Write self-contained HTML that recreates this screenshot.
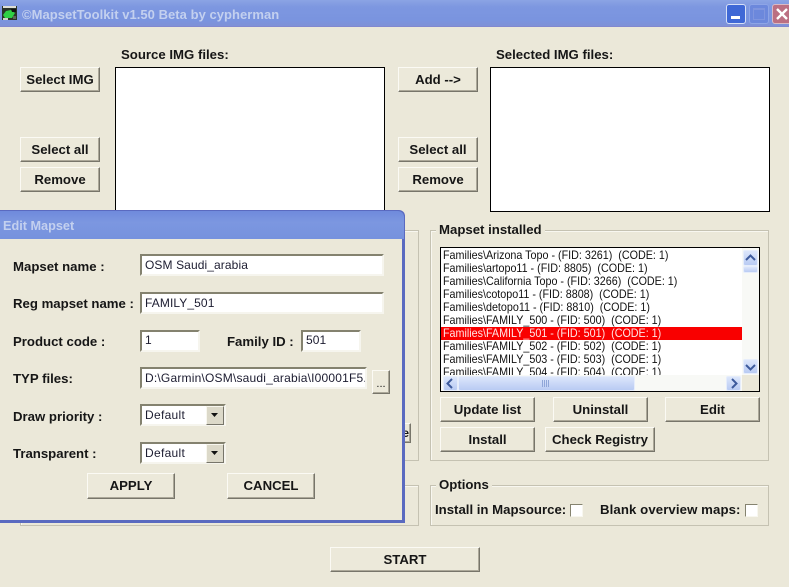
<!DOCTYPE html>
<html>
<head>
<meta charset="utf-8">
<style>
html,body{margin:0;padding:0}
body{width:789px;height:587px;position:relative;overflow:hidden;background:#ebe8d9;font-family:"Liberation Sans",sans-serif;color:#161616}
div,span{position:absolute;box-sizing:border-box;white-space:pre}
.l{font-weight:bold;font-size:13.2px;line-height:16px;height:16px}
.b{background:#ece9da;border:1px solid;border-color:#fbfaf4 #77756a #77756a #fbfaf4;box-shadow:inset -1px -1px 0 #aca899;font-weight:bold;font-size:13.2px;text-align:center}
.g{border:1px solid #c5c2b2;box-shadow:1px 1px 0 #f8f7f0 inset}
.lg{background:#ebe8d9;font-weight:bold;font-size:13.2px;line-height:16px;height:16px;padding:0 3px}
.i{background:#fff;border:2px solid;border-color:#84826f #f6f5ee #f6f5ee #84826f;font-size:12px;line-height:19px;padding-left:3px;color:#1c1c30;overflow:hidden;letter-spacing:.1px}
.w{background:#fff;border:1px solid #000}
.r{left:2px;width:300px;height:13px;font-size:12px;line-height:13px;color:#111}
.r span{left:0;top:0;transform:scaleX(.895);transform-origin:0 0}
.sb{background:linear-gradient(#dce6fb,#b9cbf3);border:1px solid #e6edfb;border-radius:2px}
.dd{width:18px;height:19px;background:#dcd9c9;border:1px solid;border-color:#f8f7ef #77756a #77756a #f8f7ef}
.cb{width:13px;height:13px;background:#fff;border:1px solid;border-color:#85836f #f8f7ef #f8f7ef #85836f}
</style>
</head>
<body>
<!-- title bar -->
<div style="left:0;top:0;width:789px;height:27px;background:linear-gradient(#8ba4e4 0,#7d97e0 25%,#7a94df 75%,#7f90d6 100%)"></div>
<div style="left:0;top:26px;width:789px;height:1px;background:#8188cf"></div>
<svg style="position:absolute;left:2px;top:6px" width="15" height="14"><rect width="15" height="14" fill="#2a3428"/><rect x="1" y="0" width="13" height="2" fill="#dedfd6"/><path d="M1 9L4 5L9 4L13 7L10 12H3Z" fill="#2fd044"/><path d="M9 3H14V6H10Z" fill="#111"/><path d="M1 12H6V14H1Z" fill="#cfd3c8"/><path d="M11 10H14V13H11Z" fill="#5b6a58"/></svg>
<div style="left:22px;top:6px;height:17px;font-size:13px;line-height:17px;font-weight:bold;color:#c3d0ef;letter-spacing:.04px">©MapsetToolkit v1.50 Beta by cypherman</div>
<div style="left:726px;top:4px;width:20px;height:20px;background:#3f68d6;border:1px solid #d7e0f6;border-radius:3px"></div>
<div style="left:731px;top:16px;width:9px;height:3px;background:#fff"></div>
<div style="left:749px;top:4px;width:20px;height:20px;background:#6c88dc;border:1px solid #8ea5e6;border-radius:3px"></div>
<div style="left:753px;top:8px;width:12px;height:12px;border:1px solid #7f95de;border-top:2px solid #7f95de"></div>
<div style="left:772px;top:4px;width:20px;height:20px;background:#bb6f82;border:1px solid #d9b9c4;border-radius:3px"></div>
<svg style="position:absolute;left:772px;top:4px" width="17" height="20"><path d="M5 5L15 15M15 5L5 15" stroke="#fff" stroke-width="2.4"/></svg>

<!-- top area -->
<div class="l" style="left:121px;top:47px">Source IMG files:</div>
<div class="l" style="left:496px;top:47px">Selected IMG files:</div>
<div class="w" style="left:115px;top:67px;width:270px;height:160px"></div>
<div class="w" style="left:490px;top:67px;width:280px;height:145px"></div>

<div class="b" style="left:20px;top:67px;width:80px;height:25px;line-height:23px">Select IMG</div>
<div class="b" style="left:20px;top:137px;width:80px;height:25px;line-height:23px">Select all</div>
<div class="b" style="left:20px;top:167px;width:80px;height:25px;line-height:23px">Remove</div>
<div class="b" style="left:398px;top:67px;width:80px;height:25px;line-height:23px">Add --&gt;</div>
<div class="b" style="left:398px;top:137px;width:80px;height:25px;line-height:23px">Select all</div>
<div class="b" style="left:398px;top:167px;width:80px;height:25px;line-height:23px">Remove</div>

<!-- left groups behind dialog -->
<div class="g" style="left:20px;top:230px;width:399px;height:231px"></div>
<div class="g" style="left:20px;top:485px;width:399px;height:41px"></div>
<div class="b" style="left:380px;top:423px;width:31px;height:20px;font-size:12px;line-height:18px;text-align:right;padding-right:1px">e</div>

<!-- Mapset installed -->
<div class="g" style="left:430px;top:230px;width:339px;height:231px"></div>
<div class="lg" style="left:436px;top:222px">Mapset installed</div>
<div class="w" style="left:440px;top:247px;width:320px;height:145px;overflow:hidden">
  <div class="r" style="top:1px"><span>Families\Arizona Topo - (FID: 3261)  (CODE: 1)</span></div>
  <div class="r" style="top:14px"><span>Families\artopo11 - (FID: 8805)  (CODE: 1)</span></div>
  <div class="r" style="top:27px"><span>Families\California Topo - (FID: 3266)  (CODE: 1)</span></div>
  <div class="r" style="top:40px"><span>Families\cotopo11 - (FID: 8808)  (CODE: 1)</span></div>
  <div class="r" style="top:53px"><span>Families\detopo11 - (FID: 8810)  (CODE: 1)</span></div>
  <div class="r" style="top:66px"><span>Families\FAMILY_500 - (FID: 500)  (CODE: 1)</span></div>
  <div class="r" style="top:79px;left:0;width:301px;background:#f90000;color:#ffe6e6"><span style="left:2px">Families\FAMILY_501 - (FID: 501)  (CODE: 1)</span></div>
  <div class="r" style="top:92px"><span>Families\FAMILY_502 - (FID: 502)  (CODE: 1)</span></div>
  <div class="r" style="top:105px"><span>Families\FAMILY_503 - (FID: 503)  (CODE: 1)</span></div>
  <div class="r" style="top:118px"><span>Families\FAMILY_504 - (FID: 504)  (CODE: 1)</span></div>
  <!-- v scrollbar -->
  <div style="left:301px;top:0;width:17px;height:127px;background:#f8f9f6"></div>
  <div class="sb" style="left:302px;top:2px;width:15px;height:16px"></div>
  <svg style="position:absolute;left:304px;top:6px" width="11" height="8"><path d="M1 6L5.5 1.5L10 6" fill="none" stroke="#3d5a9c" stroke-width="2"/></svg>
  <div class="sb" style="left:302px;top:18px;width:15px;height:7px"></div>
  <div class="sb" style="left:302px;top:111px;width:15px;height:15px"></div>
  <svg style="position:absolute;left:304px;top:115px" width="11" height="8"><path d="M1 2L5.5 6.5L10 2" fill="none" stroke="#3d5a9c" stroke-width="2"/></svg>
  <!-- h scrollbar -->
  <div style="left:0;top:127px;width:318px;height:16px;background:#f8f9f6"></div>
  <div class="sb" style="left:2px;top:128px;width:15px;height:15px"></div>
  <svg style="position:absolute;left:5px;top:130px" width="8" height="11"><path d="M6 1L1.5 5.5L6 10" fill="none" stroke="#3d5a9c" stroke-width="2"/></svg>
  <div class="sb" style="left:17px;top:128px;width:177px;height:15px"></div>
  <div style="left:101px;top:132px;width:8px;height:7px;background:repeating-linear-gradient(90deg,#8fa6d8 0 1px,transparent 1px 2px)"></div>
  <div class="sb" style="left:285px;top:128px;width:15px;height:15px"></div>
  <svg style="position:absolute;left:289px;top:130px" width="8" height="11"><path d="M2 1L6.5 5.5L2 10" fill="none" stroke="#3d5a9c" stroke-width="2"/></svg>
  <div style="left:301px;top:127px;width:17px;height:16px;background:#ebe8d9"></div>
</div>
<div class="b" style="left:440px;top:397px;width:95px;height:25px;line-height:23px">Update list</div>
<div class="b" style="left:553px;top:397px;width:95px;height:25px;line-height:23px">Uninstall</div>
<div class="b" style="left:665px;top:397px;width:95px;height:25px;line-height:23px">Edit</div>
<div class="b" style="left:440px;top:427px;width:95px;height:25px;line-height:23px">Install</div>
<div class="b" style="left:545px;top:427px;width:110px;height:25px;line-height:23px">Check Registry</div>

<!-- Options -->
<div class="g" style="left:430px;top:485px;width:339px;height:41px"></div>
<div class="lg" style="left:436px;top:477px">Options</div>
<div class="l" style="left:435px;top:502px">Install in Mapsource:</div>
<div class="cb" style="left:570px;top:504px"></div>
<div class="l" style="left:600px;top:502px;letter-spacing:.1px">Blank overview maps:</div>
<div class="cb" style="left:745px;top:504px"></div>

<div class="b" style="left:330px;top:547px;width:150px;height:25px;line-height:23px">START</div>

<!-- Dialog -->
<div style="left:-10px;top:210px;width:415px;height:313px;background:#5a6ac0;border-radius:6px 6px 0 0"></div>
<div style="left:-10px;top:211px;width:414px;height:28px;background:linear-gradient(#6f8adc 0,#7c97e0 40%,#7692de 100%);border-radius:6px 6px 0 0"></div>
<div style="left:-10px;top:239px;width:412px;height:281px;background:#ebe8d9"></div>
<div style="left:3px;top:218px;height:17px;font-size:12.7px;line-height:17px;font-weight:bold;color:#c3d0ef">Edit Mapset</div>

<div class="l" style="left:13px;top:259px">Mapset name :</div>
<div class="l" style="left:13px;top:296px">Reg mapset name :</div>
<div class="l" style="left:13px;top:334px">Product code :</div>
<div class="l" style="left:227px;top:334px">Family ID :</div>
<div class="l" style="left:13px;top:371px">TYP files:</div>
<div class="l" style="left:13px;top:409px">Draw priority :</div>
<div class="l" style="left:13px;top:446px">Transparent :</div>

<div class="i" style="left:140px;top:254px;width:244px;height:22px">OSM Saudi_arabia</div>
<div class="i" style="left:140px;top:292px;width:244px;height:22px">FAMILY_501</div>
<div class="i" style="left:140px;top:330px;width:60px;height:22px;line-height:17px">1</div>
<div class="i" style="left:301px;top:330px;width:60px;height:22px;line-height:17px">501</div>
<div class="i" style="left:140px;top:367px;width:227px;height:22px;letter-spacing:.2px">D:\Garmin\OSM\saudi_arabia\I00001F5.</div>
<div class="b" style="left:372px;top:370px;width:18px;height:24px;font-weight:normal;font-size:11px;line-height:26px">...</div>

<div class="i" style="left:140px;top:404px;width:86px;height:22px;letter-spacing:.3px">Default</div>
<div class="dd" style="left:206px;top:406px"></div>
<svg style="position:absolute;left:211px;top:413px" width="8" height="5"><path d="M0 0H7L3.5 4Z" fill="#111"/></svg>
<div class="i" style="left:140px;top:442px;width:86px;height:22px;letter-spacing:.3px">Default</div>
<div class="dd" style="left:206px;top:444px"></div>
<svg style="position:absolute;left:211px;top:451px" width="8" height="5"><path d="M0 0H7L3.5 4Z" fill="#111"/></svg>

<div class="b" style="left:87px;top:473px;width:88px;height:26px;line-height:24px">APPLY</div>
<div class="b" style="left:227px;top:473px;width:88px;height:26px;line-height:24px">CANCEL</div>
</body>
</html>
